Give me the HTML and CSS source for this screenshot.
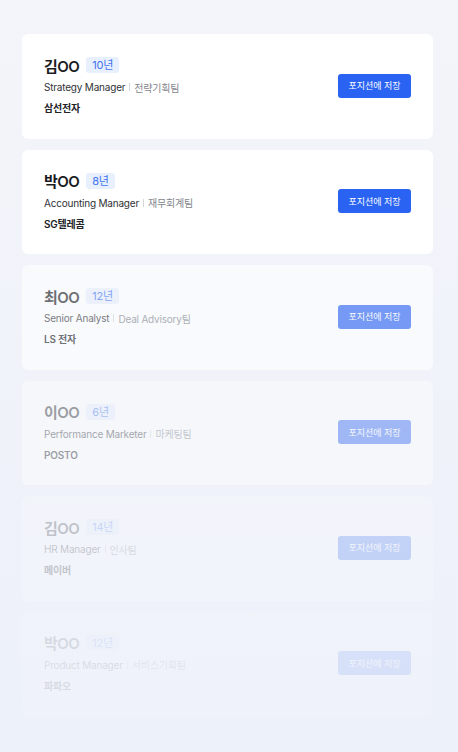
FILE: index.html
```html
<!DOCTYPE html>
<html lang="ko">
<head>
<meta charset="utf-8">
<link rel="stylesheet" href="styles.css">
</head>
<body>
<div class="list">
  <div class="card o1">
    <div class="info">
      <div class="name-row"><span class="name">김OO</span><span class="badge">10년</span></div>
      <div class="sub"><span class="role">Strategy Manager</span><span class="sep"></span><span class="team">전략기획팀</span></div>
      <div class="company">삼선전자</div>
    </div>
    <button class="save">포지션에 저장</button>
  </div>
  <div class="card o1">
    <div class="info">
      <div class="name-row"><span class="name">박OO</span><span class="badge">8년</span></div>
      <div class="sub"><span class="role">Accounting Manager</span><span class="sep"></span><span class="team">재무회계팀</span></div>
      <div class="company">SG텔레콤</div>
    </div>
    <button class="save">포지션에 저장</button>
  </div>
  <div class="card o3">
    <div class="info">
      <div class="name-row"><span class="name">최OO</span><span class="badge">12년</span></div>
      <div class="sub"><span class="role">Senior Analyst</span><span class="sep"></span><span class="team">Deal Advisory팀</span></div>
      <div class="company">LS 전자</div>
    </div>
    <button class="save">포지션에 저장</button>
  </div>
  <div class="card o4">
    <div class="info">
      <div class="name-row"><span class="name">이OO</span><span class="badge">6년</span></div>
      <div class="sub"><span class="role">Performance Marketer</span><span class="sep"></span><span class="team">마케팅팀</span></div>
      <div class="company">POSTO</div>
    </div>
    <button class="save">포지션에 저장</button>
  </div>
  <div class="card o5">
    <div class="info">
      <div class="name-row"><span class="name">김OO</span><span class="badge">14년</span></div>
      <div class="sub"><span class="role">HR Manager</span><span class="sep"></span><span class="team">인사팀</span></div>
      <div class="company">메이버</div>
    </div>
    <button class="save">포지션에 저장</button>
  </div>
  <div class="card o6">
    <div class="info">
      <div class="name-row"><span class="name">박OO</span><span class="badge">12년</span></div>
      <div class="sub"><span class="role">Product Manager</span><span class="sep"></span><span class="team">서비스기획팀</span></div>
      <div class="company">파파오</div>
    </div>
    <button class="save">포지션에 저장</button>
  </div>
</div>
</body>
</html>
```

FILE: styles.css
```css
html, body {
  margin: 0;
  padding: 0;
}
body {
  width: 458px;
  height: 752px;
  overflow: hidden;
  background: linear-gradient(180deg, #f3f5fa 0%, #eff2f9 60%, #edf1fa 100%);
  font-family: Inter, "Noto Sans CJK KR", sans-serif;
}
.list {
  display: flex;
  flex-direction: column;
  gap: 11px;
  margin: 34px 25px 0 22px;
}
.card {
  height: 104.5px;
  box-sizing: border-box;
  background: #ffffff;
  border-radius: 6px;
  padding: 21px 22px 23px 22px;
  display: flex;
  align-items: center;
  justify-content: space-between;
}
.o1 { opacity: 1; }
.o3 { opacity: 0.62; }
.o4 { opacity: 0.4; }
.o5 { opacity: 0.22; }
.o6 { opacity: 0.11; }
.info {
  display: flex;
  flex-direction: column;
  align-self: flex-start;
}
.name-row {
  display: flex;
  align-items: center;
  gap: 7px;
  height: 20px;
}
.name {
  font-size: 15px;
  font-weight: 600;
  color: #1b1c1f;
  letter-spacing: -0.5px;
}
.badge {
  height: 16px;
  line-height: 16px;
  padding: 0 6px;
  border-radius: 3px;
  background: #e8effd;
  color: #3f74ee;
  font-size: 11px;
  letter-spacing: -0.3px;
}
.sub {
  margin-top: 5px;
  height: 14px;
  display: flex;
  align-items: center;
  font-size: 10px;
  letter-spacing: -0.2px;
}
.role {
  color: #303236;
}
.sep {
  width: 1px;
  height: 8px;
  background: #d5d7dc;
  margin: 0 4px;
}
.team {
  color: #83868c;
}
.company {
  margin-top: 7px;
  height: 14px;
  line-height: 14px;
  font-size: 10px;
  font-weight: 600;
  color: #222327;
  letter-spacing: -0.2px;
}
.save {
  width: 73px;
  height: 24px;
  border: none;
  border-radius: 3px;
  background: #2a63f1;
  color: #ffffff;
  font-family: Inter, "Noto Sans CJK KR", sans-serif;
  font-size: 9px;
  padding: 0;
  margin-top: 1px;
}
```
